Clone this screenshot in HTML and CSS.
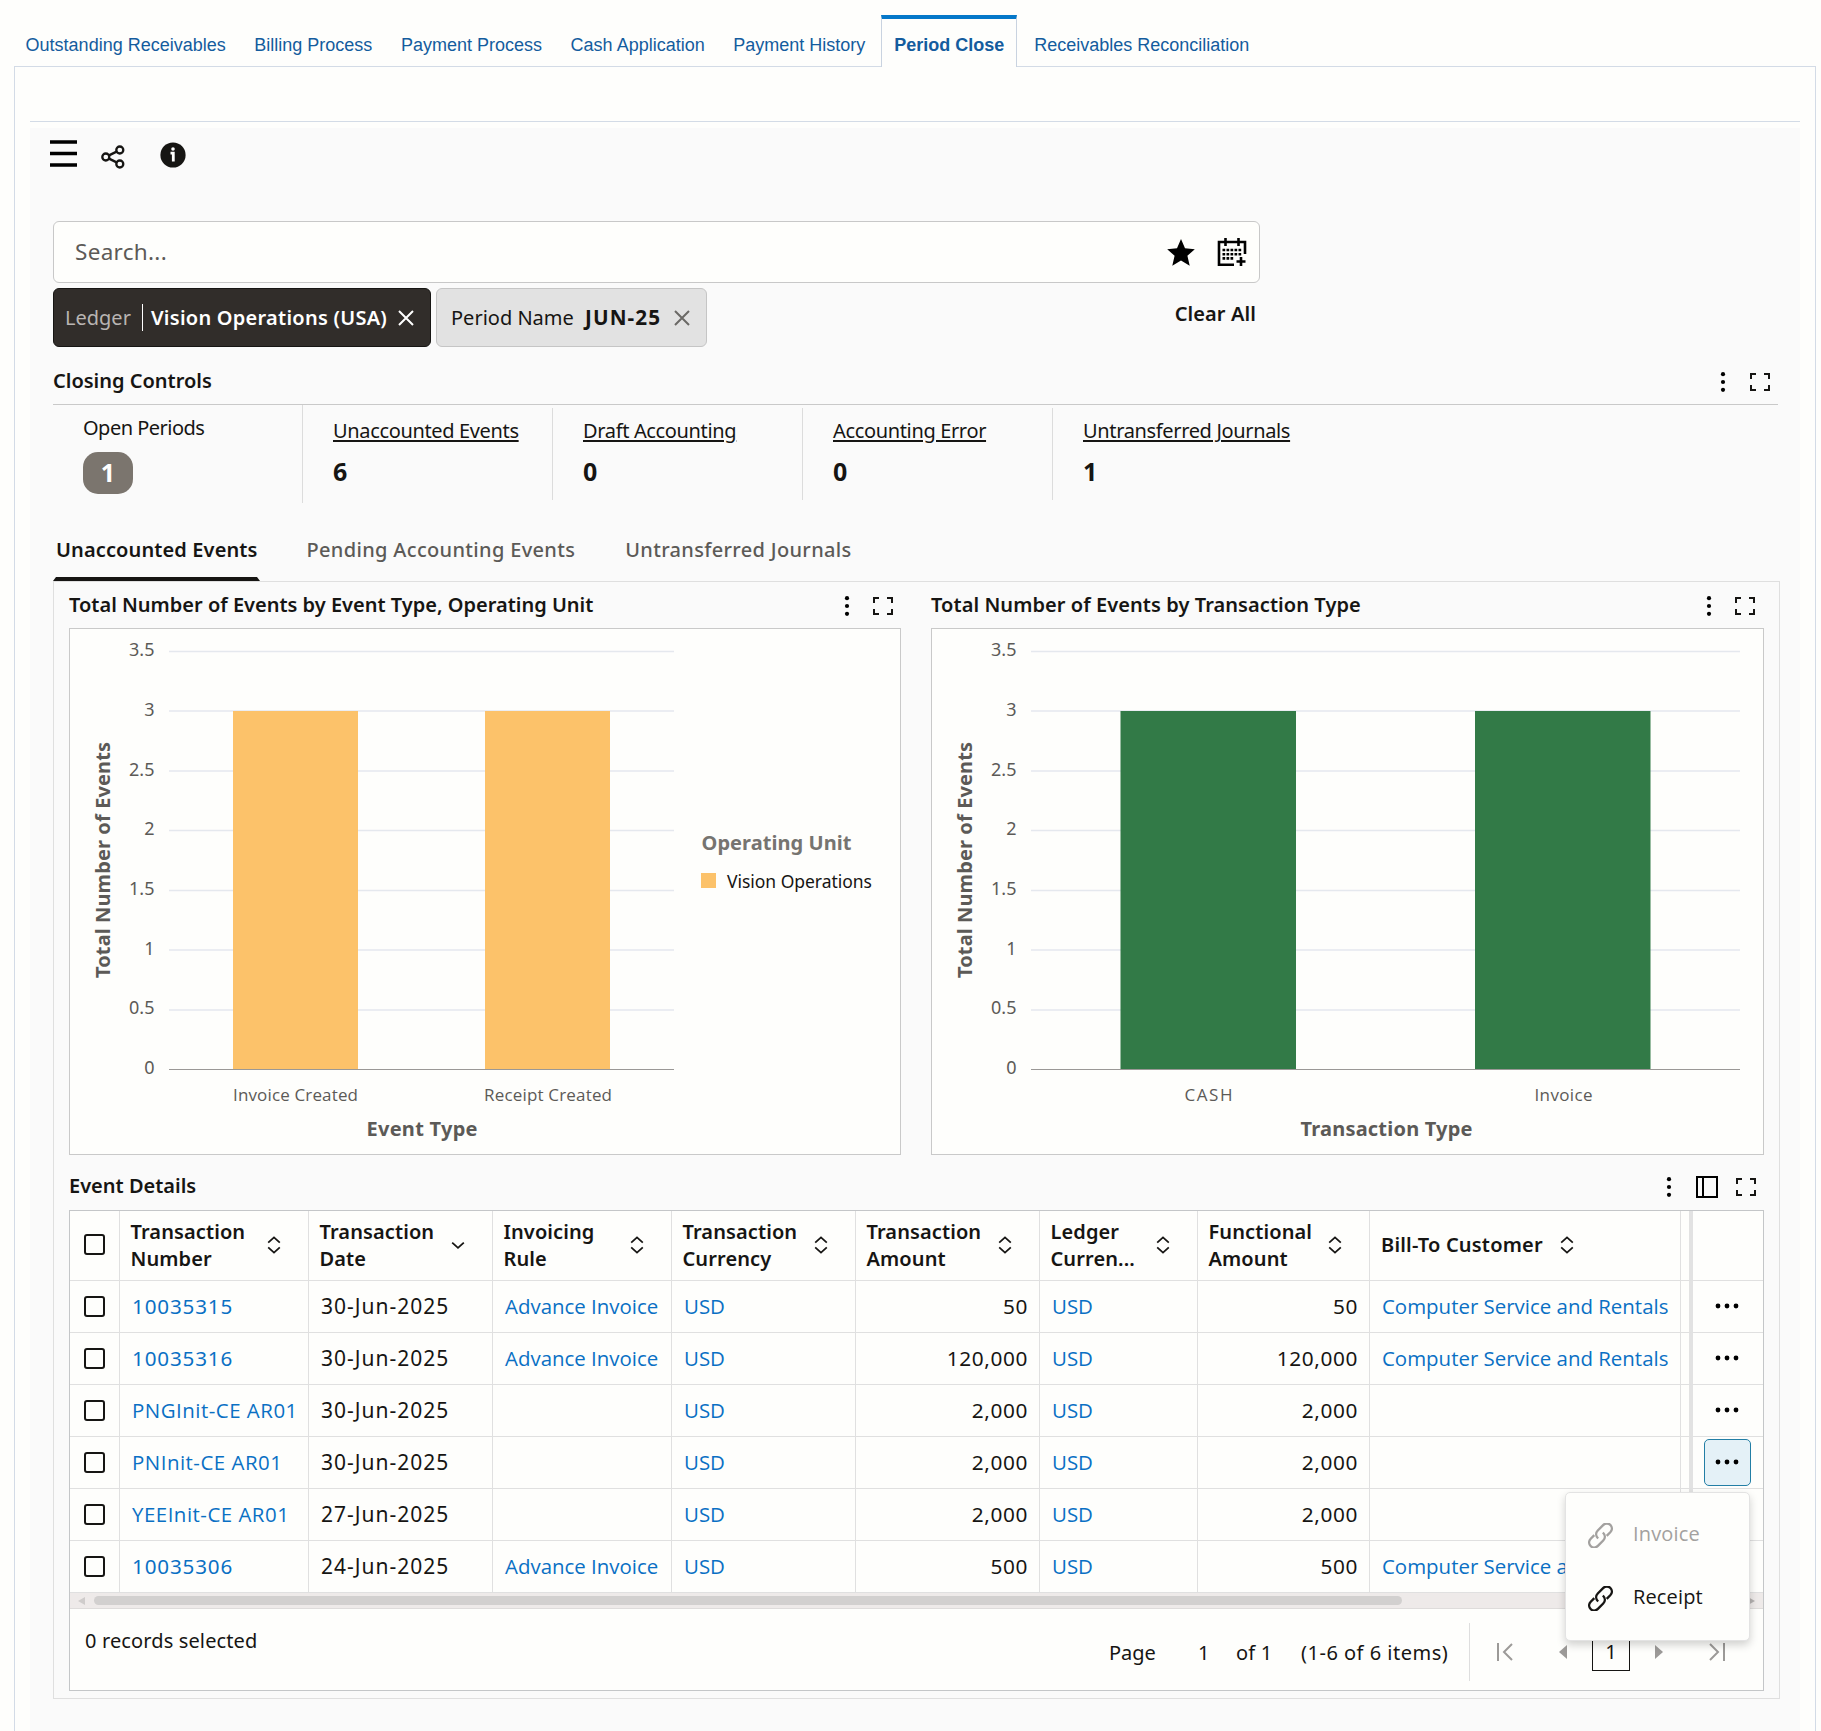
FILE: index.html
```html
<!DOCTYPE html>
<html lang="en">
<head>
<meta charset="utf-8">
<title>Period Close</title>
<link rel="stylesheet" href="styles.css">
</head>
<body>
<svg class="defs" width="0" height="0" aria-hidden="true">
  <symbol id="dots" viewBox="0 0 6 20"><circle cx="3" cy="2.2" r="2.1"/><circle cx="3" cy="10" r="2.1"/><circle cx="3" cy="17.8" r="2.1"/></symbol>
  <symbol id="expand" viewBox="0 0 20 18"><path d="M1 6V1h5M14 1h5v5M19 12v5h-5M6 17H1v-5" fill="none" stroke="currentColor" stroke-width="2"/></symbol>
  <symbol id="sort" viewBox="0 0 14 18"><path d="M1.2 6.6 7 1.4l5.8 5.2M1.2 11.4 7 16.6l5.8-5.2" fill="none" stroke="currentColor" stroke-width="1.8"/></symbol>
  <symbol id="down" viewBox="0 0 14 18"><path d="M1.2 6.6 7 11.8l5.8-5.2" fill="none" stroke="currentColor" stroke-width="1.8"/></symbol>
  <symbol id="close" viewBox="0 0 16 16"><path d="M1 1l14 14M15 1 1 15" fill="none" stroke="currentColor" stroke-width="2"/></symbol>
  <symbol id="more" viewBox="0 0 24 6"><circle cx="3" cy="3" r="2.4"/><circle cx="12" cy="3" r="2.4"/><circle cx="21" cy="3" r="2.4"/></symbol>
  <symbol id="link" viewBox="1.5 1.5 21 21"><g fill="none" stroke="currentColor" stroke-width="2"><path d="M10 14.5C7.800 12.300 7.900 9.600 9.700 7.800l4.500-4.500c1.900-1.900 4.500-1.700 6.100-.1s1.700 4.200-.1 6.100l-3 3"/><path d="M14 9.500c2.200 2.200 2.100 4.900.3 6.700l-4.500 4.500c-1.900 1.900-4.500 1.700-6.100.1s-1.700-4.200.1-6.100l3-3"/></g></symbol>
</svg>

<nav class="top-tabs">
  <a class="top-tab">Outstanding Receivables</a>
  <a class="top-tab">Billing Process</a>
  <a class="top-tab">Payment Process</a>
  <a class="top-tab">Cash Application</a>
  <a class="top-tab">Payment History</a>
  <a class="top-tab active">Period Close</a>
  <a class="top-tab">Receivables Reconciliation</a>
</nav>

<main class="panel">
  <div class="rule"></div>
  <div class="workbook">
    <div class="toolbar">
      <svg class="ic-menu" width="27" height="28" viewBox="0 0 27 28"><path d="M0 2h27M0 13.500h27M0 25h27" stroke="#000" stroke-width="3.400"/></svg>
      <svg class="ic-share" width="24" height="24" viewBox="0 0 24 24"><g fill="none" stroke="#161513" stroke-width="2.300"><circle cx="4.800" cy="12" r="3.500"/><circle cx="18.800" cy="5" r="3.500"/><circle cx="18.800" cy="19" r="3.500"/><path d="m8 10.400 7.600-3.800M8 13.600l7.600 3.800"/></g></svg>
      <svg class="ic-info" width="26" height="26" viewBox="0 0 26 26"><circle cx="13" cy="13" r="12.600" fill="#161513"/><circle cx="13" cy="7" r="1.800" fill="#fff"/><path d="M10.500 11.200h2.800v8.300" fill="none" stroke="#fff" stroke-width="2.800"/></svg>
    </div>

    <div class="search">
      <span class="placeholder">Search...</span>
      <svg class="ic-star" width="28" height="27" viewBox="0 0 28 27"><path d="m14 0 4 9.300 9.800.900-7.400 6.600 2.300 10L14 21.500 5.300 26.800l2.300-10L.2 10.200 10 9.300z"/></svg>
      <svg class="ic-cal" width="30" height="30" viewBox="0 0 30 30"><path d="M17 26.800H2V4h26v12M8.500 0v8M21.500 0v8" fill="none" stroke="#000" stroke-width="2.600"/><path d="M5.500 12h19M5.500 16.200h19M5.500 20.400h11" stroke="#000" stroke-width="2.600" stroke-dasharray="2.700 1.300"/><path d="M24 19v9M19.500 23.500h9" stroke="#000" stroke-width="2.600"/></svg>
    </div>

    <div class="chips">
      <div class="chip dark"><span class="chip-key">Ledger</span><span class="chip-val">Vision Operations (USA)</span><svg width="16" height="16"><use href="#close"/></svg></div>
      <div class="chip light"><span>Period Name</span><b>JUN-25</b><svg width="16" height="16"><use href="#close"/></svg></div>
      <span class="clear">Clear All</span>
    </div>

    <header class="head closing"><h2>Closing Controls</h2>
      <svg class="dots" width="6" height="20"><use href="#dots"/></svg><svg class="expand" width="20" height="18"><use href="#expand"/></svg></header>

    <div class="kpis">
      <div class="kpi plain"><span>Open Periods</span><b class="badge">1</b></div>
      <div class="kpi"><u>Unaccounted Events</u><b>6</b></div>
      <div class="kpi"><u>Draft Accounting</u><b>0</b></div>
      <div class="kpi"><u>Accounting Error</u><b>0</b></div>
      <div class="kpi"><u>Untransferred Journals</u><b>1</b></div>
    </div>

    <nav class="sub-tabs">
      <a class="sub-tab active">Unaccounted Events</a>
      <a class="sub-tab">Pending Accounting Events</a>
      <a class="sub-tab">Untransferred Journals</a>
    </nav>

    <section class="box">
      <div class="charts">
        <article class="chart">
          <header class="head"><h2>Total Number of Events by Event Type, Operating Unit</h2>
            <svg class="dots" width="6" height="20"><use href="#dots"/></svg><svg class="expand" width="20" height="18"><use href="#expand"/></svg></header>
          <svg class="plot" width="832" height="527" viewBox="69 628 832 527">
            <path class="grid" d="M169 651.500H674M169 711H674M169 771H674M169 830.500H674M169 890.500H674M169 950H674M169 1010H674"/>
            <rect x="233" y="711" width="125" height="358" fill="#fcc26a"/><rect x="485" y="711" width="125" height="358" fill="#fcc26a"/>
            <path class="axis" d="M169 1069.500H674"/>
            <g class="ticks"><text x="154.500" y="656">3.5</text><text x="154.500" y="716">3</text><text x="154.500" y="776">2.5</text><text x="154.500" y="835">2</text><text x="154.500" y="895">1.5</text><text x="154.500" y="955">1</text><text x="154.500" y="1014">0.5</text><text x="154.500" y="1074">0</text></g>
            <g class="cats"><text x="295.500" y="1101" textLength="125">Invoice Created</text><text x="548" y="1101" textLength="128">Receipt Created</text></g>
            <text class="title" x="422" y="1136" textLength="111">Event Type</text>
            <text class="title" transform="translate(110 860) rotate(-90)" textLength="236">Total Number of Events</text>
            <text class="legend-title" x="701.500" y="850" textLength="150">Operating Unit</text>
            <rect x="701" y="873" width="15" height="15" fill="#fcc26a"/>
            <text class="legend" x="727" y="888" textLength="145">Vision Operations</text>
          </svg>
        </article>
        <article class="chart second">
          <header class="head"><h2>Total Number of Events by Transaction Type</h2>
            <svg class="dots" width="6" height="20"><use href="#dots"/></svg><svg class="expand" width="20" height="18"><use href="#expand"/></svg></header>
          <svg class="plot" width="833" height="527" viewBox="931 628 833 527">
            <path class="grid" d="M1031 651.500H1740M1031 711H1740M1031 771H1740M1031 830.500H1740M1031 890.500H1740M1031 950H1740M1031 1010H1740"/>
            <rect x="1120.500" y="711" width="175.500" height="358" fill="#327a47"/><rect x="1475" y="711" width="175.500" height="358" fill="#327a47"/>
            <path class="axis" d="M1031 1069.500H1740"/>
            <g class="ticks"><text x="1016.500" y="656">3.5</text><text x="1016.500" y="716">3</text><text x="1016.500" y="776">2.5</text><text x="1016.500" y="835">2</text><text x="1016.500" y="895">1.5</text><text x="1016.500" y="955">1</text><text x="1016.500" y="1014">0.5</text><text x="1016.500" y="1074">0</text></g>
            <g class="cats"><text x="1208.500" y="1101" textLength="48">CASH</text><text x="1563.500" y="1101" textLength="58">Invoice</text></g>
            <text class="title" x="1386.500" y="1136" textLength="172">Transaction Type</text>
            <text class="title" transform="translate(972 860) rotate(-90)" textLength="236">Total Number of Events</text>
          </svg>
        </article>
      </div>

      <header class="head details"><h2>Event Details</h2>
        <svg class="dots" width="6" height="20"><use href="#dots"/></svg>
        <svg class="ic-cols" width="22" height="22" viewBox="0 0 22 22"><path d="M1 1h20v20H1zM7 1v20" fill="none" stroke="#000" stroke-width="2"/></svg>
        <svg class="expand" width="20" height="18"><use href="#expand"/></svg></header>

      <div class="table-box">
        <table>
          <colgroup><col style="width:50px"><col style="width:189px"><col style="width:184px"><col style="width:179px"><col style="width:184px"><col style="width:184px"><col style="width:158px"><col style="width:172px"><col style="width:311px"><col style="width:12px"><col style="width:70px"></colgroup>
          <thead><tr>
            <th><i class="check"></i></th>
            <th><div>Transaction<br>Number<svg width="14" height="18"><use href="#sort"/></svg></div></th>
            <th><div>Transaction<br>Date<svg width="14" height="18"><use href="#down"/></svg></div></th>
            <th><div>Invoicing<br>Rule<svg width="14" height="18"><use href="#sort"/></svg></div></th>
            <th><div>Transaction<br>Currency<svg width="14" height="18"><use href="#sort"/></svg></div></th>
            <th><div>Transaction<br>Amount<svg width="14" height="18"><use href="#sort"/></svg></div></th>
            <th><div>Ledger<br>Curren...<svg width="14" height="18"><use href="#sort"/></svg></div></th>
            <th><div>Functional<br>Amount<svg width="14" height="18"><use href="#sort"/></svg></div></th>
            <th><div class="inline">Bill-To Customer<svg width="14" height="18"><use href="#sort"/></svg></div></th>
            <th class="split"></th><th></th>
          </tr></thead>
          <tbody>
            <tr><td><i class="check"></i></td><td><a class="num">10035315</a></td><td class="date">30-Jun-2025</td><td><a>Advance Invoice</a></td><td><a>USD</a></td><td class="amt">50</td><td><a>USD</a></td><td class="amt">50</td><td><a>Computer Service and Rentals</a></td><td class="split"></td><td class="act"><svg width="24" height="6"><use href="#more"/></svg></td></tr>
            <tr><td><i class="check"></i></td><td><a class="num">10035316</a></td><td class="date">30-Jun-2025</td><td><a>Advance Invoice</a></td><td><a>USD</a></td><td class="amt">120,000</td><td><a>USD</a></td><td class="amt">120,000</td><td><a>Computer Service and Rentals</a></td><td class="split"></td><td class="act"><svg width="24" height="6"><use href="#more"/></svg></td></tr>
            <tr><td><i class="check"></i></td><td><a class="code">PNGInit-CE AR01</a></td><td class="date">30-Jun-2025</td><td></td><td><a>USD</a></td><td class="amt">2,000</td><td><a>USD</a></td><td class="amt">2,000</td><td></td><td class="split"></td><td class="act"><svg width="24" height="6"><use href="#more"/></svg></td></tr>
            <tr><td><i class="check"></i></td><td><a class="code">PNInit-CE AR01</a></td><td class="date">30-Jun-2025</td><td></td><td><a>USD</a></td><td class="amt">2,000</td><td><a>USD</a></td><td class="amt">2,000</td><td></td><td class="split"></td><td class="act"><span class="pressed"><svg width="24" height="6"><use href="#more"/></svg></span></td></tr>
            <tr><td><i class="check"></i></td><td><a class="code">YEEInit-CE AR01</a></td><td class="date">27-Jun-2025</td><td></td><td><a>USD</a></td><td class="amt">2,000</td><td><a>USD</a></td><td class="amt">2,000</td><td></td><td class="split"></td><td class="act"></td></tr>
            <tr><td><i class="check"></i></td><td><a class="num">10035306</a></td><td class="date">24-Jun-2025</td><td><a>Advance Invoice</a></td><td><a>USD</a></td><td class="amt">500</td><td><a>USD</a></td><td class="amt">500</td><td><a>Computer Service a</a></td><td class="split"></td><td class="act"></td></tr>
          </tbody>
        </table>
        <div class="scroll"><svg width="7" height="8" viewBox="0 0 7 8"><path d="M7 0v8L0 4z" fill="#cfcccb"/></svg><i></i><svg width="7" height="8" viewBox="0 0 7 8"><path d="M0 0v8l7-4z" fill="#b5b2b1"/></svg></div>
        <footer class="foot">
          <span class="selected">0 records selected</span>
          <div class="pager">
            <span class="p-page">Page</span><span class="p-one">1</span><span class="p-of">of 1</span><span class="p-items">(1-6 of 6 items)</span>
            <i class="p-line"></i>
            <svg class="first" width="16" height="18" viewBox="0 0 16 18"><path d="M1 0v18M15 1 7 9l8 8" fill="none" stroke="#9c9a98" stroke-width="2"/></svg>
            <svg class="prev" width="8" height="14" viewBox="0 0 8 14"><path d="M8 0v14L0 7z" fill="#9c9a98"/></svg>
            <span class="current">1</span>
            <svg class="next" width="8" height="14" viewBox="0 0 8 14"><path d="M0 0v14l8-7z" fill="#9c9a98"/></svg>
            <svg class="last" width="16" height="18" viewBox="0 0 16 18"><path d="M15 0v18M1 1l8 8-8 8" fill="none" stroke="#9c9a98" stroke-width="2"/></svg>
          </div>
        </footer>
        <div class="menu">
          <div class="item off"><svg width="25" height="25"><use href="#link"/></svg><span>Invoice</span></div>
          <div class="item"><svg width="25" height="25"><use href="#link"/></svg><span>Receipt</span></div>
        </div>
      </div>
    </section>
  </div>
</main>
</body>
</html>
```
FILE: styles.css
```css
*, *::after { box-sizing: border-box; }
html, body { height: 1731px; overflow: hidden; }
body { margin: 0; background: #fefefc; color: #161513; font: 20px/27px "Noto Sans", "Open Sans", sans-serif; }
svg { display: block; flex: none; }
.defs { position: absolute; }

.top-tabs { display: flex; height: 66px; padding: 15px 0 0 15px; font: 18px/51px "Liberation Sans", Arial, sans-serif; color: #145c9e; }
.top-tab { height: 51px; padding: 5px 18px 0 10.6px; line-height: 51px; white-space: nowrap; }
.top-tab.active { position: relative; height: 52px; margin: 0 6.2px 0 -2px; padding: 1px 12px 0; line-height: 51px; border: solid #c9d3e0; border-width: 0 1px; border-top: 4px solid #0578c9; background: #fefefc; font-weight: bold; }

.panel { height: 1665px; margin: 0 5px 0 14px; border: 1px solid #d3dbe6; border-bottom: 0; }
.rule { height: 1px; margin: 54px 15px 6px; background: #d3dbe6; }
.workbook { height: 1603px; margin: 0 15px; padding: 0 20px 0 23px; background: #fafafa; }

.toolbar { display: flex; height: 93px; }
.ic-menu { margin: 12px 0 0 -3px; }
.ic-share { margin: 17px 0 0 24px; }
.ic-info { margin: 14px 0 0 35px; }

.search { display: flex; align-items: center; width: 1207px; height: 62px; padding: 0 12px 0 21px; border: 1px solid #c8c8c8; border-radius: 6px; background: #fefefc; }
.placeholder { flex: 1; margin-top: -1px; font-size: 22.5px; letter-spacing: .3px; color: #5c5a57; }
.ic-cal { margin: 2px 0 0 22px; }

.chips { display: flex; width: 1207px; height: 60px; margin-top: 5px; }
.chip { display: flex; align-items: center; height: 59px; border: 1px solid #161513; border-radius: 6px; white-space: nowrap; }
.chip.dark { width: 378px; padding-left: 11px; background: #312d2a; color: #fff; font-weight: 600; }
.chip.dark svg { margin-left: 10px; }
.chip-key { width: 78px; height: 27px; margin-right: 8px; border-right: 1px solid #fff; font-weight: 400; color: #b9b5b3; }
.chip-val { width: 237px; letter-spacing: .25px; }
.chip.light { width: 271px; margin-left: 5px; padding-left: 14px; border-color: #c5c5c5; background: #e2e2e2; }
.chip.light span { width: 134px; }
.chip.light b { width: 75px; font-size: 20.7px; letter-spacing: 1.1px; }
.chip.light svg { margin-left: 14px; color: #6b6966; }
.clear { margin: 12px 4px 0 auto; font-weight: 600; letter-spacing: .1px; }

.head { display: flex; align-items: center; height: 46px; }
.head h2 { flex: 1; margin: -2px 0 0; font-size: 20px; line-height: 27px; font-weight: 600; }
.expand { margin: 2px 8px 0 23px; }
.dots { margin-top: 2px; }
.second h2 { letter-spacing: .07px; }
.second .expand { margin-right: 9px; }
.head.closing { height: 57px; margin-right: 2px; padding-top: 10px; border-bottom: 1px solid #c9c9c9; }
.head.closing .expand, .head.closing .dots { margin-top: 2px; }
.head.closing .expand { margin-left: 24px; }

.kpis { display: flex; height: 98px; }
.kpi { width: 250px; height: 92px; margin-top: 3px; padding: 9px 0 0 30px; border-left: 1px solid #dcdcdc; white-space: nowrap; letter-spacing: -.35px; }
.kpi.plain { width: 250px; height: 98px; margin: 0; border: 0; border-right: 1px solid #dcdcdc; }
.kpi.plain + .kpi { width: 249px; border: 0; }
.kpi u { display: block; text-decoration-thickness: 2px; text-underline-offset: 2px; }
.kpi b { display: block; margin-top: 14px; font-size: 25px; letter-spacing: 0; }
.kpi span { display: block; letter-spacing: -.52px; }
.kpi .badge { width: 50px; height: 42px; margin-top: 11px; border-radius: 15px; background: #7b756e; color: #fff; line-height: 40px; text-align: center; }

.sub-tabs { display: flex; height: 78px; font-weight: 500; color: #5c5a57; letter-spacing: .33px; }
.sub-tab { height: 78px; margin-right: 50px; padding-top: 33px; white-space: nowrap; }
.sub-tab.active { position: relative; width: 207px; margin-right: 46.5px; padding-left: 3px; font-weight: 600; letter-spacing: .12px; color: #161513; }
.sub-tab.active::after { content: ""; position: absolute; left: 0; bottom: 0; width: 100%; border: solid transparent; border-width: 0 3px 4px; border-bottom-color: #161513; }

.box { height: 1118px; padding: 0 15px; border: 1px solid #dfdfdf; }
.charts { display: flex; gap: 30px; }
.chart { width: 832px; }
.chart.second { width: 833px; flex: none; }
.plot { outline: 1px solid #c9c9c9; outline-offset: -1px; background: #fefefc; }
.grid { fill: none; stroke: #e5e8ee; stroke-width: 1.5; }
.axis { stroke: #9a9896; stroke-width: 1.2; }
.ticks { font-size: 18px; fill: #5c5a57; text-anchor: end; }
.cats { font-size: 17px; fill: #5c5a57; text-anchor: middle; font-family: "Open Sans", sans-serif; }
.title { font-size: 20px; font-weight: 700; fill: #5c5a57; text-anchor: middle; }
.legend-title { font-size: 20px; font-weight: 700; fill: #767470; }
.legend { font-size: 17.5px; fill: #161513; }

.head.details { height: 55px; padding-top: 7px; }
.head.details .dots, .head.details .expand { margin-top: 2px; }
.head.details .expand { margin-left: 18px; }
.ic-cols { margin: 2px 0 0 24px; }

.table-box { position: relative; width: 1695px; height: 481px; border: 1px solid #c4c6c8; background: #fefefc; }
table { width: 1693px; table-layout: fixed; border-spacing: 0; }
th, td { padding: 0; border: solid #e0e0e0; border-width: 0 1px 1px 0; text-align: left; white-space: nowrap; }
th:last-child, td:last-child { border-right: 0; }
th { height: 70px; padding-bottom: 2px; font-weight: 600; letter-spacing: .1px; }
th div { position: relative; padding-left: 10.5px; }
th div svg { position: absolute; right: 27px; top: 18px; }
th .inline { display: flex; align-items: center; gap: 17px; padding-left: 11px; letter-spacing: .2px; }
th .inline svg { position: static; }
td { height: 52px; padding-left: 12px; }
td:first-child { padding-left: 0; }
td a { color: #0a70c4; font: 20.45px/27px "Open Sans", sans-serif; }
td .num { font: 20.6px/27px "Noto Sans", sans-serif; letter-spacing: .85px; }
td .code { letter-spacing: .5px; }
.date { font-size: 21px; letter-spacing: 1px; }
.amt { padding-right: 11px; text-align: right; font-size: 20.8px; letter-spacing: .6px; }
.check { display: block; width: 21px; height: 21px; margin-left: 14px; border: 2px solid #161513; border-radius: 3px; }
th.split, td.split { padding: 0; border-right: 4px solid #e2e2e2; }
td.act { padding: 0; }
.act > svg { margin: -1px 0 0 22px; }
.pressed { display: flex; align-items: center; justify-content: center; width: 47px; height: 47px; margin-left: 11px; border: 1px solid #227ea5; border-radius: 5px; background: #e4f1f7; }
.pressed svg { margin: -1px 0 0 -1px; }

.scroll { display: flex; align-items: center; justify-content: space-between; height: 16px; padding: 0 8px; background: #eeeae9; border-bottom: 1px solid #dedcdb; }
.scroll i { width: 1308px; height: 9px; margin: 0 auto 0 9px; border-radius: 5px; background: #d2d0cf; }
.foot { display: flex; justify-content: space-between; height: 82px; padding: 18px 0 0 15px; white-space: nowrap; }
.selected { letter-spacing: .13px; }
.pager { display: flex; align-items: center; width: 654px; height: 52px; margin-top: -1px; }
.p-page { width: 89px; }
.p-one { width: 38px; }
.p-of { width: 65px; letter-spacing: .2px; }
.p-items { width: 168px; letter-spacing: .5px; }
.p-line { width: 1px; height: 58px; margin-right: 27px; background: #dedede; }
.prev { margin-left: 46px; }
.current { width: 38px; height: 38px; margin-left: 25px; border: 1px solid #161513; line-height: 36px; text-align: center; }
.next { margin-left: 25px; }
.last { margin-left: 46px; }

.menu { position: absolute; left: 1495px; top: 281px; width: 185px; height: 149px; padding-top: 9px; border: 1px solid #e3e3e3; border-radius: 5px; background: #fefefc; box-shadow: 0 4px 8px rgba(0, 0, 0, .18); }
.item { display: flex; align-items: center; gap: 20px; height: 63px; padding-left: 22px; font-family: "Open Sans", sans-serif; letter-spacing: .15px; }
.item svg { margin-top: 4px; }
.item.off { color: #a3a19f; }
```
